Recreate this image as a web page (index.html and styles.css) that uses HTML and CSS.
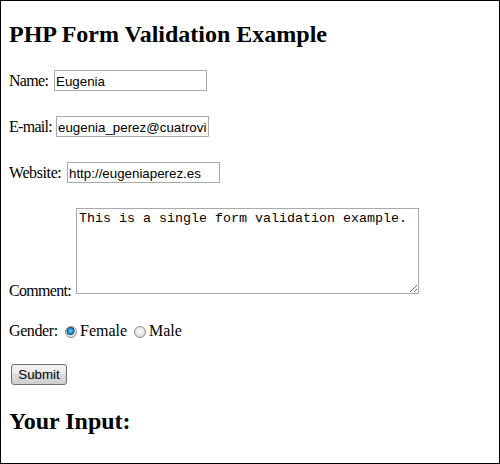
FILE: index.html
```html
<!DOCTYPE html>
<html>
<head>
<meta charset="utf-8">
<title>PHP Form Validation Example</title>
<link rel="stylesheet" href="styles.css">
</head>
<body>
<div class="frame">
  <h2 class="title">PHP Form Validation Example</h2>
  <form class="form" onsubmit="return false">
    <div class="row row-first">
      <span class="lbl lbl-name">Name:</span>
      <input class="field" type="text" value="Eugenia">
    </div>
    <div class="row">
      <span class="lbl lbl-email">E-mail:</span>
      <input class="field" type="text" value="eugenia_perez@cuatrovientos.org">
    </div>
    <div class="row">
      <span class="lbl lbl-web">Website:</span>
      <input class="field" type="text" value="http://eugeniaperez.es">
    </div>
    <div class="row row-comment">
      <span class="lbl lbl-comment">Comment:</span>
      <textarea class="comment">This is a single form validation example.</textarea>
    </div>
    <div class="gender">
      <span class="lbl lbl-gender">Gender:</span><input class="radio" type="radio" name="g" checked><span class="opt opt-female">Female</span><input class="radio" type="radio" name="g"><span class="opt">Male</span>
    </div>
    <button class="submit" type="button">Submit</button>
  </form>
  <h2 class="title title-input">Your Input:</h2>
</div>
</body>
</html>
```

FILE: styles.css
```css
html, body {
  margin: 0;
  padding: 0;
  background: #fff;
}

.frame {
  width: 500px;
  height: 464px;
  box-sizing: border-box;
  border: 1px solid #000;
  padding: 0 8px;
  overflow: hidden;
  font-family: "Liberation Serif", "Times New Roman", serif;
  font-size: 16px;
  color: #000;
}

.title {
  margin: 19px 0 0;
  font-size: 24px;
  line-height: 28px;
  font-weight: bold;
}

.title-input {
  margin-top: 22px;
}

.form {
  margin: 0;
}

.row {
  display: flex;
  align-items: baseline;
  height: 21px;
  margin-top: 25px;
}

.row-first {
  margin-top: 22px;
}

.lbl {
  display: inline-block;
  line-height: 18px;
  letter-spacing: -0.7px;
  white-space: nowrap;
  flex: none;
}

.lbl-name { width: 45px; }
.lbl-email { width: 47px; }
.lbl-web { width: 58px; letter-spacing: -0.4px; }
.lbl-comment { width: 67px; }
.lbl-gender { width: 56px; letter-spacing: -0.4px; }

.field {
  width: 153px;
  height: 21px;
  box-sizing: border-box;
  margin: 0;
  padding: 1px 1px 0;
  border: 1px solid #a9a9a9;
  font-family: "Liberation Sans", Arial, sans-serif;
  font-size: 13.33px;
  color: #000;
  background: #fff;
  outline: none;
}

.row-comment {
  height: 92px;
  align-items: flex-end;
}

.comment {
  width: 343px;
  height: 86px;
  box-sizing: border-box;
  margin: 0 0 6px;
  padding: 2px;
  border: 1px solid #a9a9a9;
  font-family: "Liberation Mono", "Courier New", monospace;
  font-size: 13.33px;
  line-height: 15px;
  color: #000;
  background: #fff;
  outline: none;
  overflow: hidden;
}

.gender {
  margin-top: 22px;
  line-height: 18px;
  height: 18px;
  white-space: nowrap;
}

.radio {
  -webkit-appearance: none;
  appearance: none;
  display: inline-block;
  width: 12px;
  height: 12px;
  box-sizing: border-box;
  margin: 0 3px 0 0;
  padding: 0;
  vertical-align: -2px;
  border: 1px solid #8d8d8d;
  border-radius: 50%;
  background: radial-gradient(circle at 50% 40%, #fdfdfd 0%, #e6e6e6 55%, #cfcfcf 100%);
}

.radio:checked {
  background:
    radial-gradient(circle at 45% 40%, #6fd0f5 0%, #1f8fc9 30%, #0c4f85 48%, transparent 52%),
    radial-gradient(circle at 50% 40%, #fdfdfd 0%, #e6e6e6 55%, #cfcfcf 100%);
}

.opt {
  display: inline-block;
}

.opt-female {
  width: 54px;
}

.submit {
  display: block;
  width: 56px;
  height: 21px;
  box-sizing: border-box;
  margin: 24px 0 0 2px;
  padding: 0;
  border: 1px solid #707070;
  border-radius: 3px;
  background: linear-gradient(#f2f2f2 0%, #ebebeb 50%, #dddddd 50%, #cfcfcf 100%);
  font-family: "Liberation Sans", Arial, sans-serif;
  font-size: 13.33px;
  color: #000;
}
```
